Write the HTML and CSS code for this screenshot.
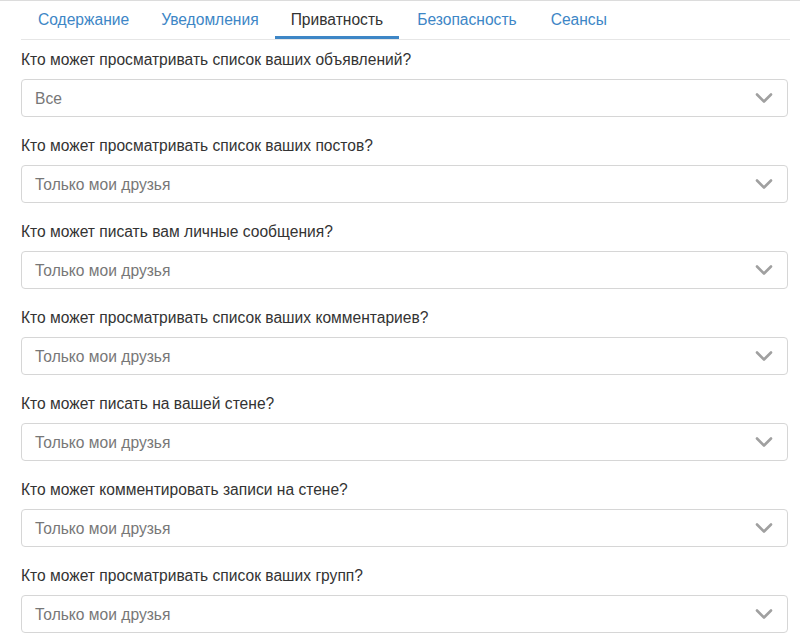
FILE: index.html
```html
<!DOCTYPE html>
<html lang="ru">
<head>
<meta charset="utf-8">
<link rel="stylesheet" href="styles.css">
</head>
<body>
<div class="page">
  <nav class="tabs">
    <a class="tab">Содержание</a>
    <a class="tab">Уведомления</a>
    <a class="tab active">Приватность</a>
    <a class="tab">Безопасность</a>
    <a class="tab">Сеансы</a>
  </nav>
  <form class="form">
    <div class="group">
      <label class="label">Кто может просматривать список ваших объявлений?</label>
      <div class="select"><span>Все</span><svg class="chev" viewBox="0 0 18 12"><path d="M2 2.5 L9 9.5 L16 2.5"/></svg></div>
    </div>
    <div class="group">
      <label class="label">Кто может просматривать список ваших постов?</label>
      <div class="select"><span>Только мои друзья</span><svg class="chev" viewBox="0 0 18 12"><path d="M2 2.5 L9 9.5 L16 2.5"/></svg></div>
    </div>
    <div class="group">
      <label class="label">Кто может писать вам личные сообщения?</label>
      <div class="select"><span>Только мои друзья</span><svg class="chev" viewBox="0 0 18 12"><path d="M2 2.5 L9 9.5 L16 2.5"/></svg></div>
    </div>
    <div class="group">
      <label class="label">Кто может просматривать список ваших комментариев?</label>
      <div class="select"><span>Только мои друзья</span><svg class="chev" viewBox="0 0 18 12"><path d="M2 2.5 L9 9.5 L16 2.5"/></svg></div>
    </div>
    <div class="group">
      <label class="label">Кто может писать на вашей стене?</label>
      <div class="select"><span>Только мои друзья</span><svg class="chev" viewBox="0 0 18 12"><path d="M2 2.5 L9 9.5 L16 2.5"/></svg></div>
    </div>
    <div class="group">
      <label class="label">Кто может комментировать записи на стене?</label>
      <div class="select"><span>Только мои друзья</span><svg class="chev" viewBox="0 0 18 12"><path d="M2 2.5 L9 9.5 L16 2.5"/></svg></div>
    </div>
    <div class="group">
      <label class="label">Кто может просматривать список ваших групп?</label>
      <div class="select"><span>Только мои друзья</span><svg class="chev" viewBox="0 0 18 12"><path d="M2 2.5 L9 9.5 L16 2.5"/></svg></div>
    </div>
  </form>
</div>
</body>
</html>
```
FILE: styles.css
```css
* { box-sizing: border-box; }
html, body { margin: 0; padding: 0; background: #fff; }
body {
  font-family: "Liberation Sans", Arial, sans-serif;
  font-size: 15.6px;
  color: #333;
  border-top: 1px solid #dcdcdc;
  overflow: hidden;
}
.page {
  padding: 0 12px 0 21px;
}
.tabs {
  display: flex;
  height: 39px;
  border-bottom: 1px solid #e6e6e6;
  margin-right: -2px;
}
.tab {
  display: block;
  padding: 0 16px;
  line-height: 37px;
  height: 38px;
  color: #3d86c6;
  border-bottom: 3px solid transparent;
  cursor: pointer;
}
.tab:first-child { margin-left: 1px; }
.tab:nth-child(4) { margin-left: 2px; }
.tab:nth-child(5) { margin-left: 2px; }
.tab.active {
  color: #333;
  border-bottom-color: #3d86c6;
}
.form {
  padding-top: 9px;
}
.group {
  margin-bottom: 18px;
}
.label {
  display: block;
  line-height: 20px;
  padding-top: 1px;
  margin-bottom: 9px;
  color: #333;
}
.select {
  height: 38px;
  border: 1px solid #d6d6d6;
  border-radius: 4px;
  display: flex;
  align-items: center;
  justify-content: space-between;
  padding: 0 14px 0 13px;
  color: #777;
}
.select span {
  padding-top: 2px;
}
.chev {
  width: 18px;
  height: 12px;
}
.chev path {
  fill: none;
  stroke: #a0a0a0;
  stroke-width: 2.6;
  stroke-linecap: round;
  stroke-linejoin: round;
}
```
